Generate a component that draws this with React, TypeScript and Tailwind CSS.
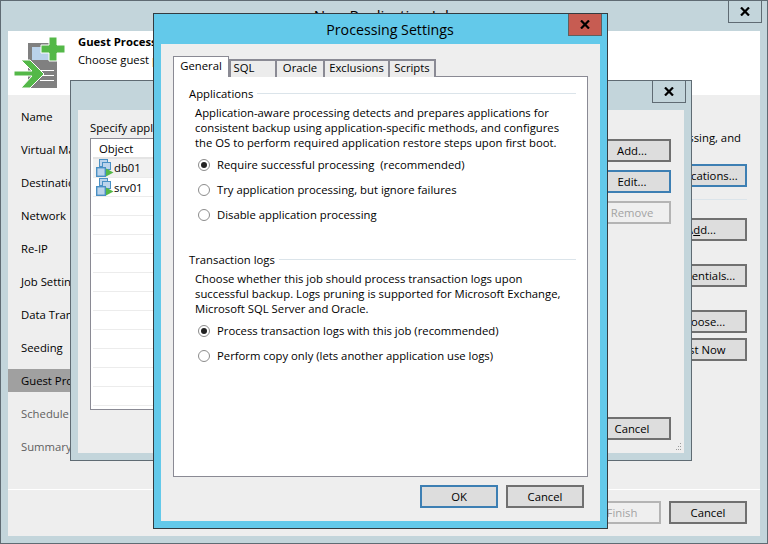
import React from 'react';

const font = { fontFamily: '"Open Sans", "Noto Sans", sans-serif' };

const Button: React.FC<{ label: React.ReactNode; focus?: boolean; disabled?: boolean; className?: string }> = ({ label, focus, disabled, className }) => (
  <div
    className={`flex h-[23px] items-center justify-center border-2 text-[11.3px] leading-none ${
      disabled
        ? 'border-[#b4b4b4] bg-[#efefef] text-[#a3a3a3]'
        : focus
          ? 'border-[#3d7fb3] bg-[#dddddd] text-black'
          : 'border-[#707070] bg-[#dddddd] text-black'
    } ${className ?? 'w-[78px]'}`}
  >
    {label}
  </div>
);

const CloseButton: React.FC<{ red?: boolean }> = ({ red }) => (
  <div
    className={`absolute right-[5px] top-0 flex h-[22px] w-[34px] items-center justify-center border border-t-0 ${
      red ? 'border-[#5f5f5f] bg-[#c75c52]' : 'border-[#5f6b73] bg-[#c3d5db]'
    }`}
  >
    <svg width="10" height="9" viewBox="0 0 10 9">
      <path d="M1 0.5 L9 8.5 M9 0.5 L1 8.5" stroke="#000" strokeWidth="2.2" fill="none" />
    </svg>
  </div>
);

const Radio: React.FC<{ label: string; checked?: boolean }> = ({ label, checked }) => (
  <div className="flex h-[15px] items-center gap-[7px] pl-[9px] text-[11.3px] leading-[15px] text-black">
    <span className="flex h-[12px] w-[12px] items-center justify-center rounded-full border border-[#8c8c8c] bg-white">
      {checked && <span className="h-[6px] w-[6px] rounded-full bg-[#222222]" />}
    </span>
    <span className="whitespace-pre">{label}</span>
  </div>
);

const GroupTitle: React.FC<{ label: string }> = ({ label }) => (
  <div className="flex items-center gap-[4px] text-[11.3px] leading-[15px] text-black">
    <span className="whitespace-nowrap">{label}</span>
    <span className="h-px flex-1 bg-[#dbe4ea]" />
  </div>
);

const WizardLogo = () => (
  <svg width="56" height="52" viewBox="14 37 56 52" className="mt-[4px] shrink-0">
    <rect x="28" y="43" width="29" height="45" fill="#808080" />
    <rect x="32" y="47" width="17" height="13" fill="#b9d2ea" />
    <path d="M49 37h8v8h8v8h-8v8h-8v-8h-8v-8h8z" fill="#54b848" stroke="#fff" strokeWidth="1" />
    <path d="M40 70.5h14M42 75.5h12M40 80.5h14" stroke="#fff" strokeWidth="1" />
    <path d="M21 60h9l14 14-14 14h-9l11-12H14v-5h18z" fill="#54b848" stroke="#fff" strokeWidth="1" />
  </svg>
);

const VmIcon = () => (
  <svg width="18" height="18" viewBox="0 0 18 18" className="shrink-0">
    <rect x="3.5" y="0.5" width="8" height="7" fill="#bcd4ec" stroke="#4a90c4" />
    <rect x="6.5" y="3.5" width="8" height="7" fill="#bcd4ec" stroke="#4a90c4" />
    <rect x="0.7" y="8.7" width="8.6" height="8.6" fill="#bcd4ec" stroke="#4a90c4" strokeWidth="1.4" />
    <path d="M10 9.5l7.5 4-7.5 4z" fill="#54b848" />
  </svg>
);

const navItems = ['Name', 'Virtual Machines', 'Destination', 'Network', 'Re-IP', 'Job Settings', 'Data Transfer', 'Seeding', 'Guest Processing', 'Schedule', 'Summary'];

const Wizard = () => (
  <div className="absolute inset-0 flex flex-col border border-[#5f6b73] bg-[#c3d5db] px-[7px] pb-[7px] pt-[30px]">
    <div className="absolute left-0 right-0 top-[4px] text-center text-[15.2px] leading-[20px] text-black">New Replication Job</div>
    <CloseButton />
    <div className="flex h-[64px] gap-[8px] bg-white pl-[6px] pt-[2px]">
      <WizardLogo />
      <div className="text-[11.3px] leading-[18px] text-black">
        <div className="font-bold">Guest Processing</div>
        <div>Choose guest processing options for available VMs.</div>
      </div>
    </div>
    <div className="flex flex-1 flex-col bg-[#eeeeee]">
      <div className="flex flex-1">
        <div className="flex w-[140px] flex-col gap-[10px] pt-[10px] text-[11.3px]">
          {navItems.map((n, i) => (
            <div
              key={n}
              className={`flex h-[23px] items-center pl-[13px] pt-[2px] ${i === 8 ? 'bg-[#a0a0a0] text-black' : i > 8 ? 'text-[#5f5f5f]' : 'text-black'}`}
            >
              {n}
            </div>
          ))}
        </div>
        <div className="flex flex-1 flex-col items-end pr-[13px] pt-[35px] text-[11.3px] text-black">
          <div className="pr-[6px] leading-[15px]">Choose guest processing, and</div>
          <Button label="Applications..." focus className="mt-[19px] w-[92px]" />
          <div className="mt-[12px] h-px w-full bg-[#dbe4ea]" />
          <Button label={<span>A<u>d</u>d...</span>} className="mt-[18px] w-[92px]" />
          <Button label="Credentials..." className="mt-[23px] w-[92px]" />
          <Button label="Choose..." className="mt-[23px] w-[92px]" />
          <Button label="Test Now" className="mt-[5px] w-[92px]" />
        </div>
      </div>
      <div className="flex h-[47px] items-start justify-end gap-[8px] border-t border-white pr-[13px] pt-[11px]">
        <Button label="Finish" disabled />
        <Button label="Cancel" />
      </div>
    </div>
  </div>
);

const Mid = () => (
  <div className="absolute left-[70px] top-[80px] flex h-[381px] w-[622px] flex-col border border-[#5f6b73] bg-[#c3d5db] px-[7px] pb-[7px] pt-[29px]">
    <CloseButton />
    <div className="relative flex flex-1 gap-[8px] bg-[#eeeeee] pl-[12px] pr-[13px] pt-[10px]">
      <div className="flex w-[500px] flex-col">
        <div className="text-[11.3px] leading-[16px] text-black">Specify application-aware processing settings:</div>
        <div className="mt-[2px] h-[272px] border border-[#8a8a94] bg-white p-[1px] pl-[2px]">
          <div className="flex h-[19px] items-center border-b-2 border-[#e4e4e4] pl-[6px] pt-[2px] text-[11.3px] text-black">Object</div>
          {Array.from({ length: 13 }).map((_, i) => (
            <div
              key={i}
              className={`flex h-[19px] items-center border-b border-[#ececec] pl-[3px] text-[11.3px] text-black ${i === 0 ? 'bg-[#f1f1f1]' : ''}`}
            >
              {i === 0 && <VmIcon />}
              {i === 0 && <span className="pt-[1px]">db01</span>}
              {i === 1 && <VmIcon />}
              {i === 1 && <span className="pt-[2px]">srv01</span>}
            </div>
          ))}
        </div>
      </div>
      <div className="flex flex-col pt-[19px]">
        <Button label="Add..." />
        <Button label="Edit..." focus className="mt-[8px] w-[78px]" />
        <Button label="Remove" disabled className="mt-[8px] w-[78px]" />
        <Button label="Cancel" className="mt-[193px] w-[78px]" />
      </div>
      <svg width="8" height="8" viewBox="0 0 8 8" className="absolute bottom-[2px] right-[2px]">
        <path d="M6 0h1v1H6zM4 3h1v1H4zM6 3h1v1H6zM2 6h1v1H2zM4 6h1v1H4zM6 6h1v1H6z" fill="#9a9a9a" />
      </svg>
    </div>
  </div>
);

const Tab: React.FC<{ label: string; width: string }> = ({ label, width }) => (
  <div className={`flex h-[18px] items-center justify-center border-2 border-b-0 border-r-0 border-[#8a8a94] bg-[#ececec] pb-[2px] text-[11.3px] leading-none text-black ${width}`}>{label}</div>
);

const Settings = () => (
  <div className="absolute left-[153px] top-[13px] flex h-[516px] w-[455px] flex-col border border-[#333b40] bg-[#63c9ea] px-[7px] pb-[7px] pt-[30px]">
    <div className="absolute left-0 right-0 top-[6px] pl-[19px] text-center text-[14.2px] leading-[20px] text-black">Processing Settings</div>
    <CloseButton red />
    <div className="flex flex-1 flex-col bg-[#eeeeee] px-[12px] pt-[12px]">
      <div className="relative z-10 flex h-[21px] items-end">
        <div className="flex h-[21px] w-[56px] items-center justify-center border border-b-0 border-[#8a8a94] bg-white pb-[2px] text-[11.3px] leading-none text-black">General</div>
        <Tab label="SQL" width="w-[46px] pr-[18px]" />
        <Tab label="Oracle" width="w-[48px]" />
        <Tab label="Exclusions" width="w-[65px]" />
        <Tab label="Scripts" width="w-[48px] border-r-2" />
      </div>
      <div className="-mt-px h-[401px] border border-[#8a8a94] bg-white pl-[15px] pr-[11px] pt-[9px]">
        <GroupTitle label="Applications" />
        <div className="mt-[4px] whitespace-nowrap pl-[6px] text-[11.3px] leading-[15px] text-black">
          Application-aware processing detects and prepares applications for
          <br />
          consistent backup using application-specific methods, and configures
          <br />
          the OS to perform required application restore steps upon first boot.
        </div>
        <div className="mt-[7px] flex flex-col gap-[10px]">
          <Radio label="Require successful processing  (recommended)" checked />
          <Radio label="Try application processing, but ignore failures" />
          <Radio label="Disable application processing" />
        </div>
        <div className="mt-[30px]">
          <GroupTitle label="Transaction logs" />
        </div>
        <div className="mt-[4px] whitespace-nowrap pl-[6px] text-[11.3px] leading-[15px] text-black">
          Choose whether this job should process transaction logs upon
          <br />
          successful backup. Logs pruning is supported for Microsoft Exchange,
          <br />
          Microsoft SQL Server and Oracle.
        </div>
        <div className="mt-[7px] flex flex-col gap-[10px]">
          <Radio label="Process transaction logs with this job (recommended)" checked />
          <Radio label="Perform copy only (lets another application use logs)" />
        </div>
      </div>
      <div className="flex justify-end gap-[8px] pr-[4px] pt-[8px]">
        <Button label="OK" focus />
        <Button label="Cancel" />
      </div>
    </div>
  </div>
);

const App: React.FC = () => (
  <div className="relative h-[544px] w-[768px] overflow-hidden" style={font}>
    <Wizard />
    <Mid />
    <Settings />
  </div>
);

export default App;
